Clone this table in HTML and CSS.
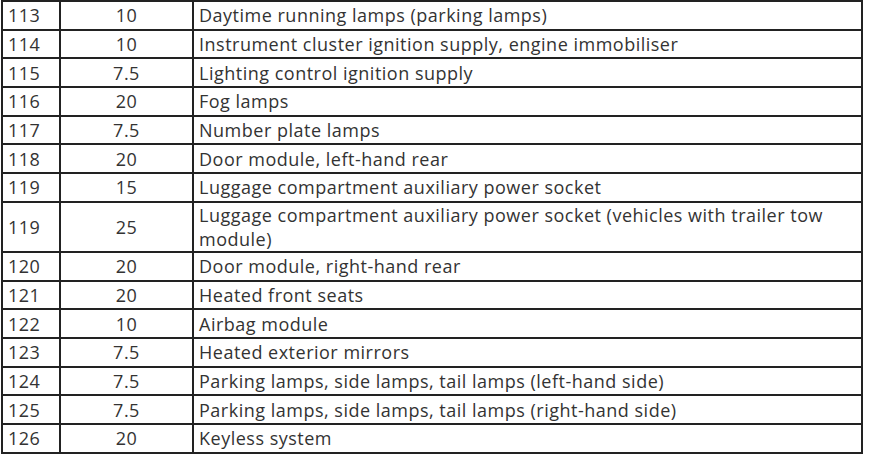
FILE: index.html
```html
<!DOCTYPE html>
<html>
<head>
<meta charset="utf-8">
<link rel="stylesheet" href="styles.css">
</head>
<body>
<table class="fuses">
<colgroup><col class="c1"><col class="c2"><col class="c3"></colgroup>
<tbody>
<tr><td>113</td><td class="amp">10</td><td>Daytime running lamps (parking lamps)</td></tr>
<tr><td>114</td><td class="amp">10</td><td>Instrument cluster ignition supply, engine immobiliser</td></tr>
<tr><td>115</td><td class="amp">7.5</td><td>Lighting control ignition supply</td></tr>
<tr><td>116</td><td class="amp">20</td><td>Fog lamps</td></tr>
<tr><td>117</td><td class="amp">7.5</td><td>Number plate lamps</td></tr>
<tr><td>118</td><td class="amp">20</td><td>Door module, left-hand rear</td></tr>
<tr><td>119</td><td class="amp">15</td><td>Luggage compartment auxiliary power socket</td></tr>
<tr class="tall"><td>119</td><td class="amp">25</td><td>Luggage compartment auxiliary power socket (vehicles with trailer tow module)</td></tr>
<tr><td>120</td><td class="amp">20</td><td>Door module, right-hand rear</td></tr>
<tr><td>121</td><td class="amp">20</td><td>Heated front seats</td></tr>
<tr><td>122</td><td class="amp">10</td><td>Airbag module</td></tr>
<tr><td>123</td><td class="amp">7.5</td><td>Heated exterior mirrors</td></tr>
<tr><td>124</td><td class="amp">7.5</td><td>Parking lamps, side lamps, tail lamps (left-hand side)</td></tr>
<tr><td>125</td><td class="amp">7.5</td><td>Parking lamps, side lamps, tail lamps (right-hand side)</td></tr>
<tr><td>126</td><td class="amp">20</td><td>Keyless system</td></tr>
</tbody>
</table>
</body>
</html>
```

FILE: styles.css
```css
html, body {
  margin: 0;
  padding: 0;
  background: #ffffff;
}
body {
  padding: 0 0 0 1px;
  font-family: "Open Sans", "Noto Sans", sans-serif;
  font-size: 18px;
  letter-spacing: 0.5px;
  color: #333333;
}
.fuses {
  border-collapse: collapse;
  width: 862px;
  table-layout: fixed;
}
.c1 { width: 58px; }
.c2 { width: 133px; }
.fuses td {
  border: 2px solid #222222;
  height: 28.7px;
  padding: 0 5px;
  line-height: 22px;
  vertical-align: middle;
  box-sizing: border-box;
}
.fuses td.amp {
  text-align: center;
}
.fuses tr.tall td {
  height: 50px;
  line-height: 24px;
}
```
